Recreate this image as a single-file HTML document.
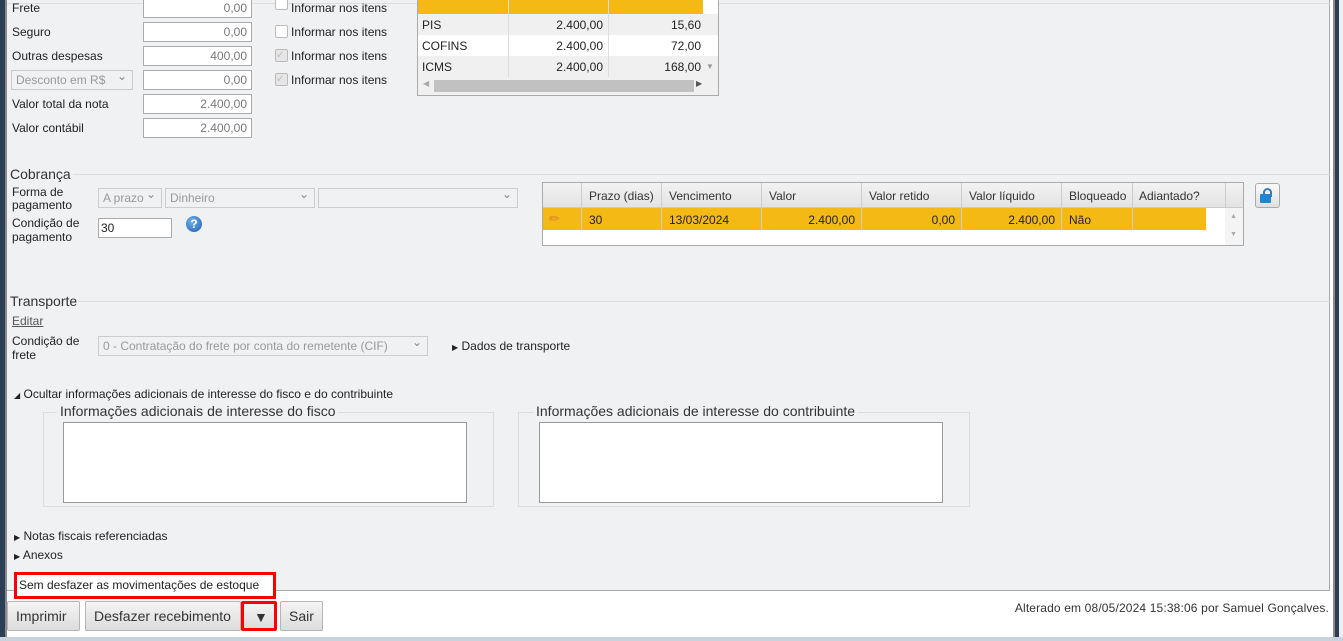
<!DOCTYPE html>
<html><head><meta charset="utf-8"><style>
*{box-sizing:border-box;margin:0;padding:0}
body{width:1343px;height:641px;overflow:hidden;background:#fff;font-family:"Liberation Sans",sans-serif;font-size:12px;color:#222;position:relative}
.a{position:absolute;white-space:nowrap}
.inp{position:absolute;background:#fff;border:1px solid #aaa;height:20px;text-align:right;padding:2px 4px;color:#777;font-size:12px}
.cb{position:absolute;width:13px;height:13px;border:1px solid #bbb;background:#fff;border-radius:2px}
.sel{position:absolute;border:1px solid #ccc;background:#f0f1f3;height:20px;color:#999;padding:2px 4px;font-size:12px;white-space:nowrap;overflow:hidden}
.sel:after{content:"⌄";position:absolute;right:5px;top:-2px;color:#888}
.btn{position:absolute;top:601px;height:30px;border:1px solid #b5b5b5;border-radius:2px;background:linear-gradient(#f4f4f4,#dcdcdc);font-size:14px;color:#333;padding:6px 8px;white-space:nowrap}
</style></head><body>
<div class="a" style="left:0;top:0;width:5px;height:641px;background:#2b3e55"></div>
<div class="a" style="left:5px;top:0;width:2px;height:641px;background:#8a8a8a"></div>
<div class="a" style="left:7px;top:0;width:1323px;height:591px;background:#f0f1f3;border-right:1px solid #aaa;border-bottom:1px solid #aaa"></div>
<div class="a" style="left:7px;top:3px;width:1323px;height:1px;background:#ddd"></div>
<div class="a" style="left:1333px;top:0;width:2px;height:641px;background:#8a8a8a"></div>
<div class="a" style="left:1335px;top:0;width:4px;height:641px;background:#2b3e55"></div>
<div class="a" style="left:1339px;top:0;width:4px;height:641px;background:#eee"></div>
<div class="a" style="left:0;top:637px;width:1343px;height:4px;background:#c9d3de"></div>

<div class="a" style="left:12px;top:1px">Frete</div>
<div class="a" style="left:12px;top:25px">Seguro</div>
<div class="a" style="left:12px;top:49px">Outras despesas</div>
<div class="a" style="left:12px;top:97px">Valor total da nota</div>
<div class="a" style="left:12px;top:121px">Valor contábil</div>
<div class="sel" style="left:11px;top:70px;width:122px">Desconto em R$</div>
<div class="inp" style="left:143px;top:-2px;width:109px">0,00</div>
<div class="inp" style="left:143px;top:22px;width:109px">0,00</div>
<div class="inp" style="left:143px;top:46px;width:109px">400,00</div>
<div class="inp" style="left:143px;top:70px;width:109px">0,00</div>
<div class="inp" style="left:143px;top:94px;width:109px">2.400,00</div>
<div class="inp" style="left:143px;top:118px;width:109px">2.400,00</div>
<div class="cb" style="left:275px;top:-3px"></div><div class="a" style="left:291px;top:1px">Informar nos itens</div>
<div class="cb" style="left:275px;top:25px"></div><div class="a" style="left:291px;top:25px">Informar nos itens</div>
<div class="cb" style="left:275px;top:49px;background:#e6e6e6;color:#bbb;font-size:10px;line-height:11px">✓</div><div class="a" style="left:291px;top:49px">Informar nos itens</div>
<div class="cb" style="left:275px;top:73px;background:#e6e6e6;color:#bbb;font-size:10px;line-height:11px">✓</div><div class="a" style="left:291px;top:73px">Informar nos itens</div>

<div class="a" style="left:417px;top:-1px;width:302px;height:97px;border:1px solid #aaa;background:#fff;overflow:hidden">
<div class="a" style="left:0;top:0;width:285px;height:14px;background:#f4b915"></div>
<div class="a" style="left:0;top:14px;width:300px;height:21px;background:#f0f0f0"></div>
<div class="a" style="left:0;top:56px;width:300px;height:21px;background:#f0f0f0"></div>
<div class="a" style="left:90px;top:0;width:1px;height:77px;background:#ddd"></div>
<div class="a" style="left:190px;top:0;width:1px;height:77px;background:#ddd"></div>
<div class="a" style="left:4px;top:18px">PIS</div><div class="a" style="left:100px;top:18px;width:85px;text-align:right">2.400,00</div><div class="a" style="left:195px;top:18px;width:88px;text-align:right">15,60</div>
<div class="a" style="left:4px;top:39px">COFINS</div><div class="a" style="left:100px;top:39px;width:85px;text-align:right">2.400,00</div><div class="a" style="left:195px;top:39px;width:88px;text-align:right">72,00</div>
<div class="a" style="left:4px;top:60px">ICMS</div><div class="a" style="left:100px;top:60px;width:85px;text-align:right">2.400,00</div><div class="a" style="left:195px;top:60px;width:88px;text-align:right">168,00</div>
<div class="a" style="left:288px;top:62px;font-size:8px;color:#999">▼</div>
<div class="a" style="left:0;top:77px;width:300px;height:18px;background:#f0f0f0"></div>
<div class="a" style="left:16px;top:80px;width:260px;height:12px;background:#c1c1c1"></div>
<div class="a" style="left:5px;top:79px;font-size:8px;color:#aaa">◀</div>
<div class="a" style="left:278px;top:79px;font-size:8px;color:#555">▶</div>
</div>

<div class="a" style="left:10px;top:174px;width:1320px;height:1px;background:#ddd"></div>
<div class="a" style="left:8px;top:166px;font-size:14px;color:#333;background:#f0f1f3;padding:0 2px">Cobrança</div>
<div class="a" style="left:12px;top:186px;line-height:13px">Forma de<br>pagamento</div>
<div class="a" style="left:12px;top:216px;line-height:14px">Condição de<br>pagamento</div>
<div class="sel" style="left:98px;top:188px;width:64px">A prazo</div>
<div class="sel" style="left:165px;top:188px;width:150px">Dinheiro</div>
<div class="sel" style="left:318px;top:188px;width:200px"></div>
<div class="a" style="left:98px;top:218px;width:74px;height:20px;border:1px solid #aaa;background:#fff;padding:2px 2px">30</div>
<div class="a" style="left:186px;top:216px;width:16px;height:16px;border-radius:50%;background:radial-gradient(circle at 40% 35%,#6fb2f0,#1a5fb0);color:#fff;font-weight:bold;text-align:center;font-size:12px;line-height:16px">?</div>

<div class="a" style="left:542px;top:182px;width:702px;height:64px;border:1px solid #aaa;background:#fff">
<div class="a" style="left:0;top:0;width:700px;height:25px;background:linear-gradient(#f3f3f3,#e3e3e3);border-bottom:1px solid #ccc"></div>
<div class="a" style="left:0;top:25px;width:663px;height:22px;background:#f4b915"></div>
<div class="a" style="left:38px;top:0;width:1px;height:47px;background:#ccc"></div>
<div class="a" style="left:118px;top:0;width:1px;height:47px;background:#ccc"></div>
<div class="a" style="left:218px;top:0;width:1px;height:47px;background:#ccc"></div>
<div class="a" style="left:318px;top:0;width:1px;height:47px;background:#ccc"></div>
<div class="a" style="left:418px;top:0;width:1px;height:47px;background:#ccc"></div>
<div class="a" style="left:518px;top:0;width:1px;height:47px;background:#ccc"></div>
<div class="a" style="left:589px;top:0;width:1px;height:47px;background:#ccc"></div>
<div class="a" style="left:682px;top:0;width:1px;height:25px;background:#ccc"></div>
<div class="a" style="left:46px;top:6px;color:#333">Prazo (dias)</div>
<div class="a" style="left:126px;top:6px;color:#333">Vencimento</div>
<div class="a" style="left:226px;top:6px;color:#333">Valor</div>
<div class="a" style="left:326px;top:6px;color:#333">Valor retido</div>
<div class="a" style="left:426px;top:6px;color:#333">Valor líquido</div>
<div class="a" style="left:526px;top:6px;color:#333">Bloqueado</div>
<div class="a" style="left:596px;top:6px;color:#333">Adiantado?</div>
<div class="a" style="left:6px;top:28px;color:#d9822b;font-size:13px">✏</div>
<div class="a" style="left:46px;top:30px">30</div>
<div class="a" style="left:126px;top:30px">13/03/2024</div>
<div class="a" style="left:222px;top:30px;width:90px;text-align:right">2.400,00</div>
<div class="a" style="left:322px;top:30px;width:90px;text-align:right">0,00</div>
<div class="a" style="left:422px;top:30px;width:90px;text-align:right">2.400,00</div>
<div class="a" style="left:526px;top:30px">Não</div>
<div class="a" style="left:682px;top:25px;width:18px;height:37px;background:#f4f4f4"></div>
<div class="a" style="left:687px;top:30px;font-size:7px;color:#aaa">▲</div>
<div class="a" style="left:687px;top:48px;font-size:7px;color:#aaa">▼</div>
</div>
<div class="a" style="left:1255px;top:183px;width:25px;height:25px;border:1px solid #aaa;border-radius:3px;background:linear-gradient(#fafafa,#e0e0e0)">
<div class="a" style="left:7px;top:4px;width:9px;height:9px;border:2px solid #3a78b8;border-bottom:none;border-radius:5px 5px 0 0"></div>
<div class="a" style="left:4px;top:10px;width:11px;height:9px;background:#1f86d0;border-radius:1px"></div></div>

<div class="a" style="left:10px;top:301px;width:1320px;height:1px;background:#ddd"></div>
<div class="a" style="left:8px;top:293px;font-size:14px;color:#333;background:#f0f1f3;padding:0 2px">Transporte</div>
<div class="a" style="left:12px;top:314px;color:#555;text-decoration:underline">Editar</div>
<div class="a" style="left:12px;top:334px;line-height:14px">Condição de<br>frete</div>
<div class="sel" style="left:98px;top:336px;width:330px">0 - Contratação do frete por conta do remetente (CIF)</div>
<div class="a" style="left:452px;top:339px"><span style="font-size:8px">▶</span> Dados de transporte</div>
<div class="a" style="left:14px;top:387px"><span style="font-size:8px">◢</span> Ocultar informações adicionais de interesse do fisco e do contribuinte</div>

<div class="a" style="left:43px;top:412px;width:451px;height:95px;border:1px solid #ddd"></div>
<div class="a" style="left:57px;top:403px;font-size:14px;color:#333;background:#f0f1f3;padding:0 3px">Informações adicionais de interesse do fisco</div>
<div class="a" style="left:63px;top:422px;width:404px;height:81px;border:1px solid #999;background:#fff"></div>
<div class="a" style="left:518px;top:412px;width:452px;height:95px;border:1px solid #ddd"></div>
<div class="a" style="left:533px;top:403px;font-size:14px;color:#333;background:#f0f1f3;padding:0 3px">Informações adicionais de interesse do contribuinte</div>
<div class="a" style="left:539px;top:422px;width:404px;height:81px;border:1px solid #999;background:#fff"></div>

<div class="a" style="left:14px;top:529px"><span style="font-size:8px">▶</span> Notas fiscais referenciadas</div>
<div class="a" style="left:14px;top:548px"><span style="font-size:8px">▶</span> Anexos</div>
<div class="a" style="left:14px;top:572px;width:262px;height:27px;border:3px solid #f00;background:#fff;padding:3px 2px">Sem desfazer as movimentações de estoque</div>

<div class="btn" style="left:7px;width:73px">Imprimir</div>
<div class="btn" style="left:85px;width:156px">Desfazer recebimento</div>
<div class="btn" style="left:241px;width:36px;border:3px solid #f00;padding:5px 10px">▼</div>
<div class="btn" style="left:280px;width:43px">Sair</div>
<div class="a" style="right:14px;top:601px;color:#333;letter-spacing:0.15px">Alterado em 08/05/2024 15:38:06 por Samuel Gonçalves.</div>
</body></html>
